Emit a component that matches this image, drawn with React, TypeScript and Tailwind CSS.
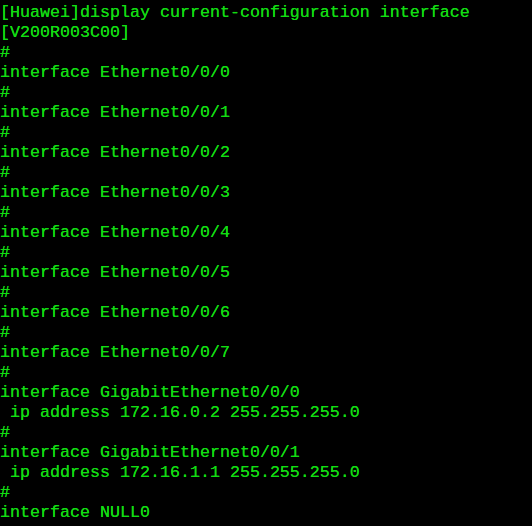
import React from "react";

const lines = [
  "[Huawei]display current-configuration interface",
  "[V200R003C00]",
  "#",
  "interface Ethernet0/0/0",
  "#",
  "interface Ethernet0/0/1",
  "#",
  "interface Ethernet0/0/2",
  "#",
  "interface Ethernet0/0/3",
  "#",
  "interface Ethernet0/0/4",
  "#",
  "interface Ethernet0/0/5",
  "#",
  "interface Ethernet0/0/6",
  "#",
  "interface Ethernet0/0/7",
  "#",
  "interface GigabitEthernet0/0/0",
  " ip address 172.16.0.2 255.255.255.0",
  "#",
  "interface GigabitEthernet0/0/1",
  " ip address 172.16.1.1 255.255.255.0",
  "#",
  "interface NULL0",
];

export default function App() {
  return (
    <div className="w-[532px] h-[526px] bg-black overflow-hidden pt-[3px]">
      <div className="flex flex-col font-['Liberation_Mono','Courier_New',monospace] text-[16.667px] leading-[20px] text-[#12dc12] whitespace-pre [text-shadow:0_0_0.4px_#12dc12]">
        {lines.map((l, i) => (
          <div key={i} className="h-[20px]">
            {l}
          </div>
        ))}
      </div>
    </div>
  );
}
